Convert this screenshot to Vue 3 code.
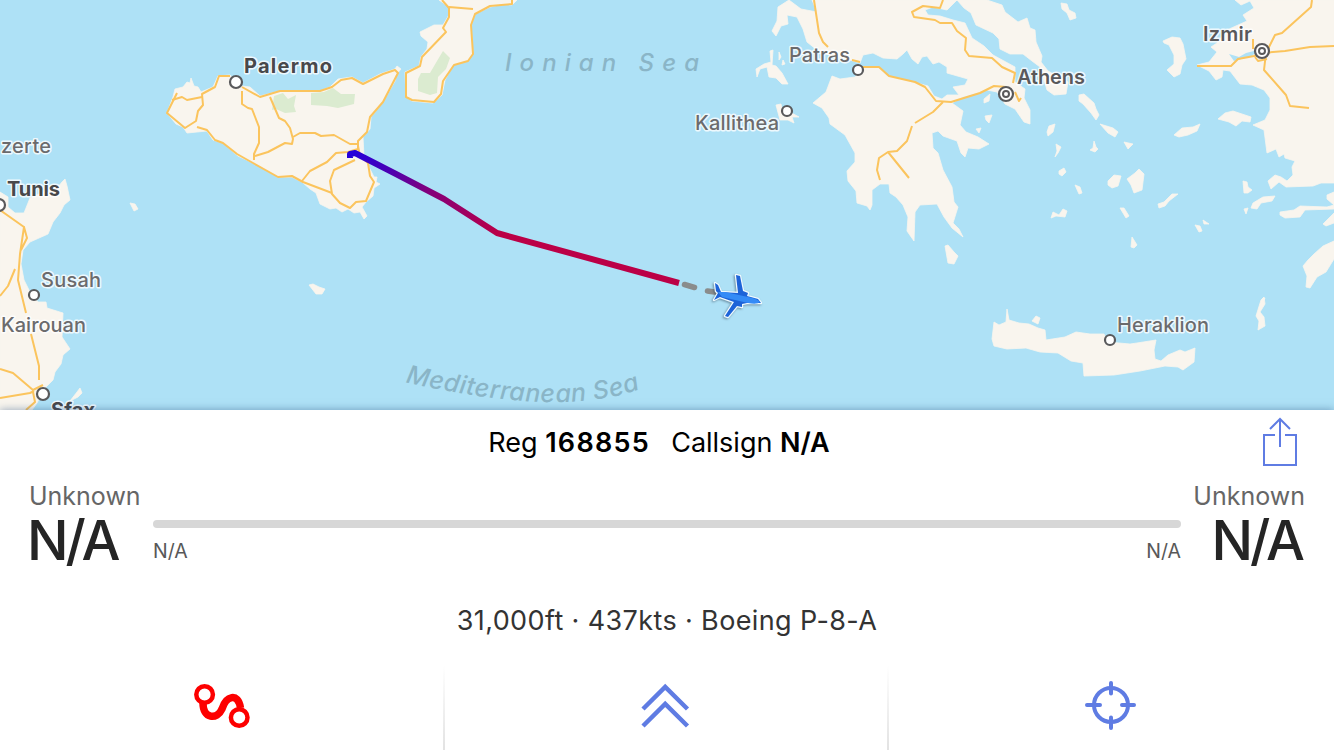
<template>
	<div class="app">
		<svg class="map" width="1334" height="410" viewBox="0 0 1334 410">
			<defs>
				<linearGradient id="trail" gradientUnits="userSpaceOnUse" x1="352" y1="153" x2="500" y2="234">
					<stop offset="0" stop-color="#2500da" />
					<stop offset="0.2" stop-color="#4200bb" />
					<stop offset="0.5" stop-color="#82007c" />
					<stop offset="1" stop-color="#bb0046" />
				</linearGradient>
				<path id="med-curve" d="M405 382 Q 567 420 648 386" />
			</defs>

			<path v-for="(d, i) in land" :key="'land' + i" class="land" :d="d" />
			<path v-for="(d, i) in lagoons" :key="'water' + i" class="water" :d="d" />
			<path v-for="(d, i) in parks" :key="'park' + i" class="park" :d="d" />
			<path v-for="(d, i) in roads" :key="'road' + i" class="road" :d="d" />

			<text class="sea" x="505" y="71" textLength="194">Ionian Sea</text>
			<text class="sea med">
				<textPath href="#med-curve" textLength="238">Mediterranean Sea</textPath>
			</text>

			<g v-for="c in cities" :key="c.name">
				<circle class="dot" :cx="c.cx" :cy="c.cy" :r="c.r" />
				<circle v-if="c.capital" class="dot inner" :cx="c.cx" :cy="c.cy" r="3" />
				<text class="city" :class="c.kind" :x="c.x" :y="c.y" :textLength="c.w">{{ c.name }}</text>
			</g>

			<path class="trail" d="M350 158 V154 L355 153 L396 174 L444 199 L497 233 L679 283" />
			<path class="trail gap" d="M684.500 284.500 L694.500 287.500 M707.500 291 L718 292.500" />

			<g class="plane">
				<path class="halo" :d="plane" />
				<path class="wings" :d="plane" />
				<path class="body" d="M718 292 L725 292 L748 297 Q758 299 760 302 Q757 305 748 303 L722 297 Z" />
			</g>
		</svg>

		<section class="panel">
			<header>
				<span>Reg <b class="reg">168855</b></span>
				<span>Callsign <b>N/A</b></span>
				<svg class="share" width="38" height="50" viewBox="0 0 38 50">
					<path d="M14 18 H3 V48 H35 V18 H24 M19 30 V2 M9 12 L19 2 L29 12" />
				</svg>
			</header>

			<div class="route">
				<div class="airport">
					<span class="place">Unknown</span>
					<span class="code">N/A</span>
				</div>
				<div class="progress">
					<div class="bar"></div>
					<div class="times">
						<span>N/A</span>
						<span>N/A</span>
					</div>
				</div>
				<div class="airport right">
					<span class="place">Unknown</span>
					<span class="code">N/A</span>
				</div>
			</div>

			<p class="details">31,000ft · 437kts · Boeing P-8-A</p>

			<nav>
				<button>
					<svg width="60" height="48" viewBox="192 682 60 48" class="red">
						<path d="M203 703 C203 719 217 720 222 709 C226 696 238 692 240.500 708" />
						<circle cx="204.600" cy="694.500" r="8.300" />
						<circle cx="239.200" cy="717.500" r="8.300" />
					</svg>
				</button>
				<button>
					<svg width="52" height="48" viewBox="640 682 52 48">
						<path d="M644 709 L666.200 687 L688.500 709 M644 726 L666.200 704 L688.500 726" />
					</svg>
				</button>
				<button>
					<svg width="54" height="54" viewBox="1084 679 54 54" class="target">
						<circle cx="1111" cy="705" r="17" />
						<path d="M1087 705 H1100 M1122 705 H1134 M1111 683 V693.500 M1111 717.500 V728" />
					</svg>
				</button>
			</nav>
		</section>
	</div>
</template>

<script setup>
const land = [
	// Sicily
	'M167 113 L173 97 L175 89 L183 87 L187 82 L190 83 L191 78 L194 86 L198 87 L201 92 L213 87 L218 76 L230 75 L242 86 L250 87 L260 96 L280 91 L320 91 L330 87 L338 79 L352 77 L363 83 L380 74 L395 69 L397 66 L401 69 L396 75 L395 81 L383 102 L371 117 L370 129 L363 137 L364 157 L368 165 L374 177 L377 177 L376 182 L380 184 L374 188 L373 196 L366 202 L362 207 L367 216 L364 219 L360 212 L354 213 L348 209 L342 212 L336 208 L330 209 L320 204 L316 193 L310 189 L302 182 L292 177 L278 177 L253 163 L238 156 L223 143 L213 140 L207 131 L187 133 L183 127 L176 124 Z',
	// Calabria
	'M439 0 L449 7 L449 15 L443 25 L434 25 L420 32 L421 36 L428 42 L427 49 L421 57 L419 66 L405 72 L406 97 L412 101 L433 103 L442 95 L445 80 L453 65 L468 61 L473 54 L471 25 L475 14 L490 7 L503 4 L512 5 L517 0 Z',
	// Tunisia
	'M0 192 L8 197 L8 207 L15 213 L24 213 L30 198 L44 192 L58 187 L62 182 L65 179 L67 186 L70 200 L64 205 L60 213 L53 222 L48 234 L30 242 L23 250 L21 264 L24 280 L30 292 L38 302 L46 302 L47 308 L63 313 L62 337 L70 349 L63 355 L61 364 L55 372 L53 380 L44 389 L37 403 L32 410 L0 410 Z',
	'M70 401 L77 392 L80 388 L82 393 L78 397 Z',
	'M130 203 L135 204 L138 209 L134 211 Z',
	'M309 285 L313 284 L319 287 L325 289 L322 294 L316 294 Z',
	// Greece and the Peloponnese
	'M812 0 L817 12 L801 9 L789 0 L778 7 L777 21 L772 31 L776 36 L781 26 L788 24 L787 15 L797 17 L803 29 L807 42 L817 50 L829 55 L850 60 L860 63 L863 55 L873 53 L883 58 L897 59 L903 54 L907 50 L912 59 L918 64 L922 57 L927 56 L933 64 L939 62 L947 67 L947 73 L968 79 L965 85 L953 87 L959 95 L947 95 L942 99 L934 96 L928 86 L913 82 L887 76 L878 67 L863 67 L855 77 L840 79 L832 76 L826 92 L813 103 L822 108 L829 118 L830 124 L845 135 L855 153 L855 162 L847 171 L848 181 L856 191 L857 203 L867 206 L870 210 L872 205 L872 190 L880 184 L889 184 L890 193 L896 197 L903 205 L908 217 L907 231 L914 241 L915 212 L920 205 L937 204 L944 217 L952 228 L963 237 L959 229 L953 223 L958 207 L954 202 L952 187 L943 170 L938 153 L933 148 L932 133 L938 131 L943 136 L957 141 L961 153 L965 157 L968 148 L979 149 L989 144 L978 137 L966 132 L960 125 L963 111 L952 103 L963 97 L987 90 L997 92 L1005 104 L1015 109 L1024 122 L1030 124 L1030 110 L1024 98 L1025 89 L1015 82 L1015 67 L993 55 L984 46 L972 38 L965 23 L953 20 L940 16 L928 15 L925 10 L933 7 L947 10 L957 0 Z',
	'M941 0 L957 0 L964 8 L971 13 L976 25 L993 33 L999 39 L1000 49 L1010 54 L1023 54 L1032 61 L1040 67 L1047 90 L1054 95 L1066 94 L1068 82 L1048 71 L1041 62 L1042 56 L1036 42 L1035 30 L1030 28 L1027 18 L1018 22 L1005 12 L1002 5 L987 0 Z',
	'M770 51 L773 50 L772 65 L776 66 L782 73 L788 84 L782 84 L776 78 L769 77 L767 67 L760 69 L757 77 L756 69 L764 64 L771 62 Z',
	'M779 52 L781 57 L779 60 Z M783 60 L785 64 L782 65 Z',
	'M776 105 L781 104 L782 109 L788 111 L799 117 L792 117 L794 123 L788 120 L780 120 Z',
	'M945 246 L948 245 L954 252 L958 256 L954 264 L948 263 Z',
	'M984 99 L990 94 L989 101 L984 103 Z M976 129 L981 128 L979 133 Z M985 116 L992 115 L989 123 L986 120 Z',
	// Aegean islands
	'M1061 3 L1067 4 L1069 10 L1075 13 L1076 18 L1070 20 L1067 13 L1062 9 Z',
	'M1079 95 L1084 94 L1094 103 L1096 109 L1099 115 L1096 120 L1091 113 L1083 104 L1079 101 Z',
	'M1100 124 L1113 128 L1118 132 L1115 137 L1108 133 Z',
	'M1049 126 L1055 124 L1053 132 L1048 136 L1047 132 Z',
	'M1056 144 L1061 147 L1058 153 L1055 157 L1057 151 Z',
	'M1094 141 L1096 147 L1098 149 L1095 152 L1090 150 L1093 148 Z',
	'M1124 142 L1133 144 L1128 149 Z',
	'M1059 171 L1064 168 L1066 172 L1062 176 L1059 174 Z',
	'M1075 185 L1080 187 L1082 193 L1079 194 Z',
	'M1108 181 L1114 175 L1121 176 L1118 186 L1112 188 L1108 185 Z',
	'M1127 179 L1135 173 L1139 169 L1144 174 L1142 190 L1134 193 L1131 185 Z',
	'M1051 218 L1053 212 L1059 215 L1063 209 L1067 211 L1065 217 L1056 216 Z',
	'M1120 208 L1124 208 L1129 216 L1126 218 Z',
	'M1132 237 L1137 245 L1134 248 L1131 247 Z',
	'M1158 204 L1164 202 L1172 194 L1178 194 L1169 201 L1165 206 L1159 208 Z',
	'M1195 225 L1200 226 L1202 231 L1199 232 Z M1203 220 L1209 224 L1204 224 Z',
	'M1163 41 L1172 37 L1180 38 L1183 44 L1186 59 L1182 65 L1180 74 L1174 77 L1167 70 L1174 64 L1174 55 L1169 45 L1164 43 Z',
	'M1218 119 L1225 113 L1233 111 L1251 117 L1250 122 L1242 121 L1236 126 L1229 122 Z',
	'M1174 135 L1182 128 L1193 127 L1200 124 L1197 131 L1188 135 L1179 137 Z',
	'M1243 181 L1247 182 L1248 187 L1252 190 L1248 193 L1244 193 Z',
	'M1253 203 L1263 197 L1275 196 L1272 201 L1261 203 L1257 209 L1251 208 Z M1244 209 L1248 208 L1246 214 Z',
	'M1280 212 L1294 210 L1300 206 L1327 207 L1334 205 V209 L1305 210 L1300 217 L1285 218 L1280 215 Z',
	'M1327 195 L1334 192 V205 L1327 199 Z M1323 224 L1334 213 V223 L1326 226 Z',
	'M1334 241 L1323 246 L1314 254 L1308 260 L1303 266 L1307 276 L1306 287 L1310 288 L1317 277 L1326 272 L1334 259 Z',
	'M1261 300 L1264 297 L1265 304 L1260 312 L1264 317 L1265 326 L1258 330 L1259 321 L1256 316 Z',
	'M1262 299 L1265 298 L1264 300 Z',
	// Turkey
	'M1235 0 L1241 5 L1250 1 L1254 8 L1243 15 L1247 21 L1227 30 L1217 43 L1211 47 L1217 52 L1209 62 L1197 65 L1209 71 L1216 80 L1222 77 L1223 70 L1230 71 L1240 84 L1252 85 L1264 90 L1270 98 L1270 110 L1265 120 L1253 125 L1264 130 L1267 153 L1276 149 L1279 157 L1284 154 L1285 158 L1295 161 L1292 167 L1293 175 L1287 181 L1281 177 L1275 175 L1268 181 L1271 189 L1279 182 L1286 187 L1313 186 L1321 183 L1334 183 V0 Z',
	// Crete
	'M992 339 L994 322 L999 325 L1006 322 L1007 309 L1009 320 L1019 323 L1029 324 L1038 328 L1045 330 L1046 340 L1065 337 L1076 332 L1090 334 L1104 334 L1108 342 L1130 344 L1137 343 L1156 340 L1154 350 L1155 359 L1161 361 L1168 355 L1180 350 L1185 352 L1195 348 L1194 362 L1183 370 L1178 367 L1165 366 L1140 371 L1114 375 L1084 376 L1083 363 L1071 361 L1058 353 L1040 352 L1026 348 L1007 349 L994 346 Z',
	'M1032 321 L1036 316 L1040 318 L1038 324 Z',
];

const lagoons = [
	'M1229 54 L1234 61 L1245 58 L1252 56 L1258 50 L1246 53 L1239 57 Z',
];

const parks = [
	'M274 96 L283 93 L288 99 L296 95 L294 106 L296 112 L285 113 L276 109 L272 110 Z',
	'M311 93 L324 92 L333 88 L341 94 L355 94 L354 104 L338 108 L327 106 L311 105 Z',
	'M418 79 L421 73 L430 73 L437 61 L443 51 L450 58 L446 69 L438 77 L437 93 L430 95 L418 91 Z',
];

const roads = [
	'M177 93 L167 113 L185 128 L196 121 L198 111 L203 105 L202 94 L215 87 L219 76 L230 76',
	'M172 100 L182 97 L187 100 L202 97',
	'M197 127 L207 130 L215 140 L223 143 L237 154 L253 163 L278 177 L292 176 L303 182 L332 193',
	'M242 87 L260 97 L280 91 L320 91 L332 87 L341 80 L352 78 L363 84 L383 74 L395 70 L398 73 L383 102 L370 117 L367 132 L358 141 L358 149 L348 152 L336 153 L327 162 L310 171 L302 181',
	'M242 91 L242 104 L248 108 L252 109 L259 127 L259 143 L254 154 L254 160',
	'M270 97 L279 118 L285 121 L290 128 L293 139 L292 144 L285 143 L268 152 L255 156',
	'M293 137 L300 133 L315 133 L321 136 L334 135 L350 144 L358 144',
	'M358 146 L360 156 L368 163 L370 176 L374 182 L366 201 L356 202 L350 208 L340 203 L332 194 L330 181 L334 170 L355 160',
	'M449 7 L473 9 M442 0 L449 8 L449 17 L443 28 L446 32 L422 57 L420 66 L406 73 L406 97 L412 100 L434 102 L441 94 L443 81 L454 65 L468 61 L473 54 L471 25 L475 14 L490 6 L512 4 V0',
	'M0 210 L24 227 L20 254 L18 280 L26 313 M24 227 L27 238 L21 250 M15 269 L8 286 L0 296',
	'M31 334 L39 366 V380 M0 369 L13 373 L33 390 L43 385 M0 398 L30 393 L34 391 M33 392 L35 402 L26 410',
	'M814 0 L819 33 L823 42 L828 47 M852 60 L860 62 M861 67 L879 67 L889 76 L915 82 L925 87 L936 101 L951 102 L980 93 L994 86 L1006 87',
	'M943 102 L933 112 L915 123 M912 126 L907 141 L897 151 L888 152 L879 158 L877 170 L880 180 M888 152 L909 178',
	'M943 0 L940 8 L923 6 L912 12 L914 17 L935 20 L940 23 L952 23 L957 31 L966 38 L965 50 L969 56 L992 58 L1002 67 L1015 73 L1013 83 M1015 92 L1019 101 L1021 98',
	'M1197 66 L1231 66 L1238 59 L1254 56 L1262 53 L1285 51 L1310 47 L1334 46 M1253 39 V49 M1312 0 L1311 7 L1282 33 L1275 35 L1266 53 L1264 70 L1286 95 L1290 106 L1309 108 M1255 57 L1258 61 L1267 59',
];

const plane = 'M715 283 L718 285 L721 292 L738 293 L736 275 L740 276 L743 291 L748 293 L747 296 L758 299 L761 303 L747 303 L742 304 L742 307 L737 306 L728 317 L725 316 L734 302 L720 297 L714 300 L718 293 L716 291 Z';

const cities = [
	{ name: 'Palermo', kind: 'major', x: 244, y: 73, w: 88, cx: 236, cy: 82, r: 6 },
	{ name: 'zerte', kind: 'minor', x: 1, y: 153, w: 50, cx: -30, cy: 150, r: 5 },
	{ name: 'Tunis', kind: 'major', x: 7, y: 196, w: 53, cx: -1, cy: 205, r: 6 },
	{ name: 'Susah', kind: 'minor', x: 41, y: 287, w: 60, cx: 34, cy: 295, r: 5 },
	{ name: 'Kairouan', kind: 'minor', x: 1, y: 332, w: 85, cx: -30, cy: 330, r: 5 },
	{ name: 'Sfax', kind: 'major', x: 51, y: 417, w: 44, cx: 43, cy: 394, r: 6 },
	{ name: 'Patras', kind: 'minor', x: 789, y: 62, w: 61, cx: 858, cy: 70, r: 5 },
	{ name: 'Kallithea', kind: 'minor', x: 695, y: 130, w: 84, cx: 787, cy: 111, r: 5 },
	{ name: 'Athens', kind: 'capital', x: 1017, y: 84, w: 68, cx: 1006, cy: 94, r: 7, capital: true },
	{ name: 'Izmir', kind: 'capital', x: 1203, y: 41, w: 49, cx: 1262, cy: 51, r: 7, capital: true },
	{ name: 'Heraklion', kind: 'minor', x: 1117, y: 332, w: 92, cx: 1110, cy: 340, r: 5 },
];
</script>

<style>
body {
	margin: 0;
	background: #fff;
}
</style>

<style scoped>
.app {
	width: 1334px;
	height: 750px;
	overflow: hidden;
	background: #fff;
	font-family: Inter, 'Liberation Sans', sans-serif;
}

.map {
	display: block;
	background: #aee1f6;
}

.land {
	fill: #f9f5ee;
	stroke: #f9f5ee;
	stroke-width: 0.8;
	stroke-linejoin: round;
}

.water {
	fill: #aee1f6;
}

.park {
	fill: #dbebd0;
}

.road {
	fill: none;
	stroke: #fbc45d;
	stroke-width: 2;
	stroke-linejoin: round;
}

.sea {
	font-size: 24px;
	font-style: italic;
	font-weight: 500;
	fill: #8ab5c7;
}

.med {
	font-size: 25px;
}

.dot {
	fill: #fff;
	stroke: #59595b;
	stroke-width: 2.2;
}

.dot.inner {
	stroke-width: 2;
}

.city {
	font-size: 20px;
	font-weight: 500;
	fill: #6b6b6d;
	stroke: rgba(255, 255, 255, 0.8);
	stroke-width: 3px;
	stroke-linejoin: round;
	paint-order: stroke;
}

.city.major {
	font-weight: 700;
	fill: #48484a;
}

.city.capital {
	font-weight: 600;
	fill: #59595b;
}

.trail {
	fill: none;
	stroke: url(#trail);
	stroke-width: 6;
	stroke-linejoin: round;
}

.trail.gap {
	stroke: #8a8c8c;
	stroke-linecap: round;
	stroke-width: 5.5;
}

.plane {
	filter: drop-shadow(-1px 1px 1px rgba(40, 60, 80, 0.5));
}

.halo {
	fill: #fff;
	stroke: #eefaff;
	stroke-width: 2.5;
	stroke-linejoin: round;
}

.wings {
	fill: #1d63d8;
}

.body {
	fill: #348bf6;
}

.panel {
	position: relative;
	display: flex;
	flex-direction: column;
	height: 340px;
	background: #fff;
	box-shadow: 0 0 8px rgba(40, 80, 130, 0.5);
}

header {
	position: relative;
	display: flex;
	justify-content: center;
	gap: 21px;
	height: 66px;
	padding-right: 16px;
	line-height: 66px;
	font-size: 27px;
	color: #000;
}

header b {
	font-weight: 600;
}

.reg {
	letter-spacing: 1.3px;
}

.share {
	position: absolute;
	top: 7px;
	right: 35px;
}

svg.share,
nav svg {
	fill: none;
	stroke: #5f7ce3;
}

.share {
	stroke-width: 2;
}

.route {
	display: flex;
	justify-content: space-between;
	height: 104px;
	padding: 0 29px;
}

.airport {
	display: flex;
	flex-direction: column;
	width: 112px;
	white-space: nowrap;
}

.airport.right {
	align-items: flex-end;
}

.place {
	margin-top: 5px;
	font-size: 25px;
	line-height: 30px;
	color: #666;
}

.code {
	margin-left: -2px;
	font-size: 55px;
	font-weight: 500;
	line-height: 58px;
	letter-spacing: -3px;
	color: #252525;
}

.right .code {
	margin-right: 3px;
}

.progress {
	flex: 1;
	padding: 44px 12px 0;
}

.bar {
	height: 8px;
	border-radius: 4px;
	background: #d7d7d7;
}

.times {
	display: flex;
	justify-content: space-between;
	margin-top: 11px;
	font-size: 19.5px;
	line-height: 24px;
	color: #585858;
}

.details {
	margin: 21px 0 0;
	text-align: center;
	font-size: 27px;
	line-height: 40px;
	letter-spacing: 0.38px;
	color: #333;
}

nav {
	display: grid;
	grid-template-columns: 443px 444px 1fr;
	height: 84px;
	margin-top: auto;
}

button {
	display: flex;
	align-items: center;
	justify-content: center;
	padding: 0 0 4px;
	border: 0;
	background: none;
}

button + button {
	padding-right: 2px;
	border-left: 2px solid;
	border-image: linear-gradient(#fff, #e2e2e2) 1;
}

nav svg {
	stroke-width: 4.5;
}

nav .target {
	stroke-width: 4;
	stroke-linecap: round;
}

nav .red {
	stroke: #fd0000;
	stroke-width: 4.5;
}

.red path {
	stroke-width: 7.5;
}

.red circle {
	fill: #fff;
}
</style>
